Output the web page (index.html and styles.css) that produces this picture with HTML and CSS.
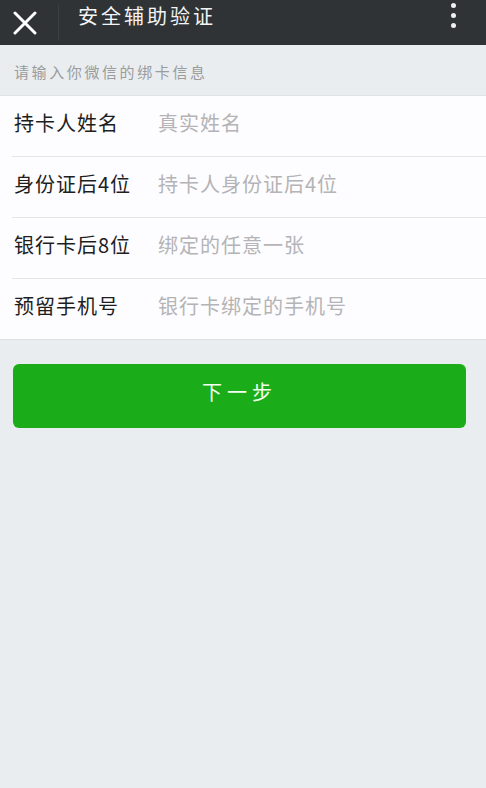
FILE: index.html
```html
<!DOCTYPE html>
<html lang="zh-CN">
  <head>
    <meta charset="UTF-8" />
    <meta name="viewport" content="width=device-width, initial-scale=1" />
    <title>安全辅助验证</title>
    <link rel="stylesheet" href="styles.css">
  </head>
  <body>
    <div class="top-bar">
      <span class="close-btn">
        <svg width="24" height="24" viewBox="0 0 24 24">
          <path d="M2 2 L22 22 M22 2 L2 22" stroke="#fff" stroke-width="3" stroke-linecap="round" />
        </svg>
      </span>
      <span class="divider"></span>
      <h1 class="title">安全辅助验证</h1>
      <span class="more-btn">
        <i></i><i></i><i></i>
      </span>
    </div>

    <p class="hint">请输入你微信的绑卡信息</p>

    <form class="card-form">
      <label class="row">
        <span class="label">持卡人姓名</span>
        <input type="text" placeholder="真实姓名" />
      </label>
      <label class="row">
        <span class="label">身份证后4位</span>
        <input type="text" placeholder="持卡人身份证后4位" />
      </label>
      <label class="row">
        <span class="label">银行卡后8位</span>
        <input type="text" placeholder="绑定的任意一张" />
      </label>
      <label class="row">
        <span class="label">预留手机号</span>
        <input type="text" placeholder="银行卡绑定的手机号" />
      </label>
    </form>

    <div class="actions">
      <button type="button">下一步</button>
    </div>
  </body>
</html>
```

FILE: styles.css
```css
body {
  margin: 0;
  background-color: #e9edf0;
  font-family: "Noto Sans CJK SC", "Noto Sans", sans-serif;
  height: 788px;
}
.top-bar {
  height: 45px;
  background-color: #2f3336;
  display: flex;
  align-items: center;
  padding: 0 0 0 13px;
}
.close-btn {
  width: 24px;
  height: 24px;
  display: flex;
}
.divider {
  width: 1px;
  height: 36px;
  background-color: #3c4043;
  margin: 0 19px 0 21px;
}
.title {
  flex: 1;
  margin: 0;
  color: #f4f4f4;
  font-size: 20px;
  font-weight: normal;
  letter-spacing: 3px;
  margin-top: -14px;
}
.more-btn {
  width: 6px;
  display: flex;
  flex-direction: column;
  gap: 5px;
  margin-right: 29px;
  margin-top: -14px;
}
.more-btn i {
  width: 5px;
  height: 5px;
  border-radius: 50%;
  background-color: #f0f0f0;
}
.hint {
  margin: 0;
  height: 51px;
  line-height: 53px;
  padding-left: 14px;
  color: #9a9c9e;
  font-size: 15px;
  letter-spacing: 2.6px;
  border-bottom: 1px solid #dfe3e6;
  box-sizing: border-box;
}
.card-form {
  background-color: #fdfcfe;
  border-bottom: 1px solid #dde1e4;
}
.row {
  display: flex;
  align-items: center;
  height: 60px;
  margin-left: 12px;
  border-top: 1px solid #e6e6e8;
}
.row:first-child {
  border-top: none;
}
.label {
  width: 142px;
  padding-left: 2px;
  color: #1e1e1e;
  font-size: 20px;
  letter-spacing: 1px;
  margin-top: -8px;
}
.row input {
  flex: 1;
  border: none;
  outline: none;
  background: transparent;
  font-family: inherit;
  font-size: 20px;
  letter-spacing: 1px;
  margin-top: -8px;
  color: #333;
}
.row input::placeholder {
  color: #b4b4b6;
}
.actions {
  padding: 24px 20px 0 13px;
}
button {
  width: 100%;
  height: 64px;
  border: none;
  border-radius: 6px;
  background-color: #1aad19;
  color: #f4fff0;
  font-family: inherit;
  font-size: 20px;
  letter-spacing: 5px;
  padding-bottom: 10px;
}
```
